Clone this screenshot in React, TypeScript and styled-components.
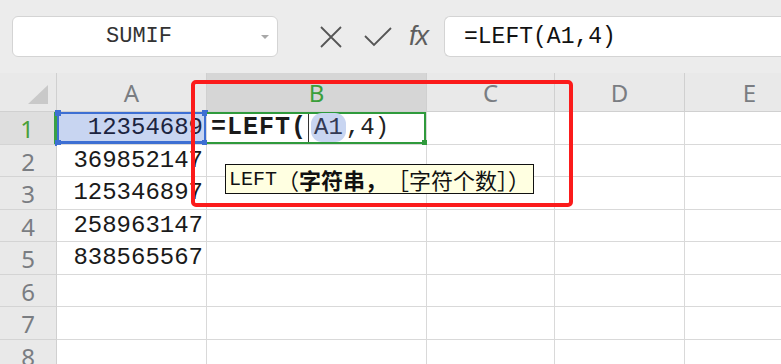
import React from "react";
import styled, { createGlobalStyle, css } from "styled-components";

const GlobalStyle = createGlobalStyle`
  html, body {
    margin: 0;
    padding: 0;
    background: #ffffff;
    overflow: hidden;
  }
`;

const Page = styled.div`
  width: 781px;
  height: 364px;
  overflow: hidden;
  background: #ffffff;
`;

const Toolbar = styled.div`
  height: 73px;
  background: #ececec;
  display: flex;
  align-items: center;
  padding-left: 12px;
  box-sizing: border-box;
`;

const NameBox = styled.div`
  width: 266px;
  height: 41px;
  box-sizing: border-box;
  background: #ffffff;
  border: 1px solid #d4d4d4;
  border-radius: 6px;
  display: flex;
  align-items: center;
  font-family: "Liberation Mono", monospace;
  font-size: 22px;
  color: #333333;
`;

const NameText = styled.span`
  flex: 1;
  text-align: center;
  padding-left: 4px;
`;

const Caret = styled.span`
  width: 0;
  height: 0;
  border-left: 4px solid transparent;
  border-right: 4px solid transparent;
  border-top: 4px solid #a8a8a8;
  margin-right: 8px;
`;

const IconButton = styled.div<{ $ml: number }>`
  width: 28px;
  height: 28px;
  margin-left: ${(p) => p.$ml}px;
  display: flex;
  align-items: center;
  justify-content: center;
  color: #555555;
`;

const Fx = styled.span`
  margin-left: 17px;
  font-family: "Liberation Sans", sans-serif;
  font-style: italic;
  font-size: 27px;
  color: #5e5e5e;
  letter-spacing: -1px;
`;

const FormulaBox = styled.div`
  margin-left: 16px;
  flex: 1;
  height: 41px;
  box-sizing: border-box;
  background: #ffffff;
  border: 1px solid #d4d4d4;
  border-right: none;
  border-radius: 6px 0 0 6px;
  display: flex;
  align-items: center;
  padding-left: 19px;
  font-family: "Liberation Mono", monospace;
  font-size: 23px;
  color: #111111;
`;

const Sheet = styled.div`
  position: relative;
  display: grid;
  grid-template-columns: 57px 150px 220px 128px 130px 130px;
  grid-template-rows: 39px repeat(8, 32.5px);
  width: 815px;
`;

const Corner = styled.div`
  background: #e9e9e9;
  border-right: 1px solid #d0d0d0;
  border-bottom: 1px solid #d0d0d0;
  display: flex;
  align-items: flex-end;
  justify-content: flex-end;
  padding: 0 8px 7px 0;
  box-sizing: border-box;
`;

const CornerTriangle = styled.div`
  width: 0;
  height: 0;
  border-left: 20px solid transparent;
  border-bottom: 19px solid #c9c9c9;
`;

const headerText = css`
  font-family: "Noto Sans", "Liberation Sans", sans-serif;
  font-size: 24px;
  box-sizing: border-box;
  display: flex;
  align-items: center;
  justify-content: center;
`;

const ColHeader = styled.div<{ $active?: boolean }>`
  ${headerText};
  background: ${(p) => (p.$active ? "#d6d6d6" : "#e9e9e9")};
  color: ${(p) => (p.$active ? "#3b9f3b" : "#7a7d82")};
  border-right: 1px solid #d0d0d0;
  border-bottom: 1px solid #d0d0d0;
`;

const RowHeader = styled.div<{ $active?: boolean }>`
  ${headerText};
  background: ${(p) => (p.$active ? "#dedede" : "#e9e9e9")};
  color: ${(p) => (p.$active ? "#4aa039" : "#7a7d82")};
  border-bottom: 1px solid #d4d4d4;
  border-right: ${(p) => (p.$active ? "3px solid #38a146" : "1px solid #d0d0d0")};
  padding-top: 2px;
`;

const Cell = styled.div<{ $ref?: boolean; $active?: boolean }>`
  position: relative;
  box-sizing: border-box;
  border-right: 1px solid #d9d9d9;
  border-bottom: 1px solid #d9d9d9;
  background: ${(p) => (p.$ref ? "#c8d5f1" : "#ffffff")};
  font-family: "Liberation Mono", monospace;
  font-size: 24px;
  color: #1a1a1a;
  display: flex;
  align-items: center;
  justify-content: flex-end;
  padding-right: 3px;
  white-space: nowrap;
  ${(p) =>
    p.$ref &&
    css`
      box-shadow: inset 2px 2px 0 #3d6fd3, inset -2px -3px 0 #3d6fd3;
      color: #1c2440;
    `}
  ${(p) =>
    p.$active &&
    css`
      justify-content: flex-start;
      padding-left: 4px;
      box-shadow: inset 0 2px 0 #2f9a3c, inset -2px -2px 0 #2f9a3c;
    `}
`;

const Handle = styled.span<{ $color: string; $top?: boolean; $left?: boolean }>`
  position: absolute;
  width: 6px;
  height: 6px;
  background: ${(p) => p.$color};
  ${(p) => (p.$top ? "top: -2px;" : "bottom: -2px;")}
  ${(p) => (p.$left ? "left: -2px;" : "right: -2px;")}
`;

const Bold = styled.span`
  font-weight: bold;
  font-size: 25px;
  letter-spacing: 1px;
`;

const Caret2 = styled.span`
  width: 1px;
  height: 28px;
  background: #333333;
  margin: 0 2px 0 1px;
`;

const RefPill = styled.span`
  background: #c8d5f1;
  border-radius: 11px;
  padding: 1px 3px;
  color: #333a55;
`;

const PlainArg = styled.span`
  color: #222222;
`;

const RedFrame = styled.div`
  position: absolute;
  left: 191px;
  top: 7px;
  width: 382px;
  height: 127px;
  box-sizing: border-box;
  border: 4px solid #fb1b1b;
  border-radius: 5px;
  pointer-events: none;
`;

const Tooltip = styled.div`
  position: absolute;
  left: 225px;
  top: 91px;
  height: 30px;
  box-sizing: border-box;
  padding: 0 3px;
  background: #ffffe1;
  border: 1px solid #111111;
  display: flex;
  align-items: center;
  font-family: "Noto Sans CJK SC", sans-serif;
  font-size: 22px;
  color: #111111;
  white-space: nowrap;
`;

const Latin = styled.span`
  font-family: "Liberation Mono", monospace;
  font-size: 20px;
`;

const Strong = styled.span`
  font-weight: bold;
`;

const XIcon = () => (
  <svg width="24" height="24" viewBox="0 0 24 24" fill="none" stroke="currentColor" strokeWidth="1.8">
    <path d="M2 2 L22 22 M22 2 L2 22" />
  </svg>
);

const CheckIcon = () => (
  <svg width="28" height="22" viewBox="0 0 28 22" fill="none" stroke="currentColor" strokeWidth="1.8">
    <path d="M1 10 L10 19 L27 2" />
  </svg>
);

const columns = ["A", "B", "C", "D", "E"];
const values = ["", "369852147", "125346897", "258963147", "838565567", "", "", ""];

export default function App() {
  return (
    <Page>
      <GlobalStyle />
      <Toolbar>
        <NameBox>
          <NameText>SUMIF</NameText>
          <Caret />
        </NameBox>
        <IconButton $ml={39}>
          <XIcon />
        </IconButton>
        <IconButton $ml={19}>
          <CheckIcon />
        </IconButton>
        <Fx>fx</Fx>
        <FormulaBox>=LEFT(A1,4)</FormulaBox>
      </Toolbar>
      <Sheet>
        <Corner>
          <CornerTriangle />
        </Corner>
        {columns.map((c) => (
          <ColHeader key={c} $active={c === "B"}>
            {c}
          </ColHeader>
        ))}
        {values.map((v, i) => {
          const row = i + 1;
          if (row === 1) {
            return (
              <React.Fragment key={row}>
                <RowHeader $active>1</RowHeader>
                <Cell $ref>
                  12354689
                  <Handle $color="#3d6fd3" $top $left />
                  <Handle $color="#3d6fd3" $top />
                  <Handle $color="#3d6fd3" $left />
                  <Handle $color="#3d6fd3" />
                </Cell>
                <Cell $active>
                  <Bold>=LEFT(</Bold>
                  <Caret2 />
                  <RefPill>A1</RefPill>
                  <PlainArg>,4)</PlainArg>
                  <Handle $color="#2f9a3c" />
                </Cell>
                <Cell />
                <Cell />
                <Cell />
              </React.Fragment>
            );
          }
          return (
            <React.Fragment key={row}>
              <RowHeader>{row}</RowHeader>
              <Cell>{v}</Cell>
              <Cell />
              <Cell />
              <Cell />
              <Cell />
            </React.Fragment>
          );
        })}
        <RedFrame />
        <Tooltip>
          <Latin>LEFT</Latin>（<Strong>字符串，</Strong>［字符个数］）
        </Tooltip>
      </Sheet>
    </Page>
  );
}
